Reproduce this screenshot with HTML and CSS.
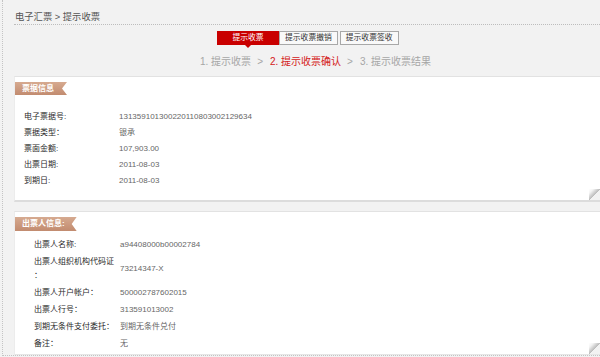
FILE: index.html
```html
<!DOCTYPE html>
<html lang="zh-CN">
<head>
<meta charset="utf-8">
<title>提示收票</title>
<link rel="stylesheet" href="styles.css">
</head>
<body>
<div class="page">
  <div class="crumb">电子汇票 &gt; 提示收票</div>
  <div class="tabs">
    <span class="tab tab-active">提示收票</span>
    <span class="tab">提示收票撤销</span>
    <span class="tab tab-last">提示收票签收</span>
  </div>
  <div class="steps">
    <span class="step">1. 提示收票</span><span class="sep">&gt;</span><span class="step step-current">2. 提示收票确认</span><span class="sep">&gt;</span><span class="step">3. 提示收票结果</span>
  </div>
  <section class="panel panel-bill">
    <div class="ribbon">票据信息</div>
    <div class="fields fields-bill">
      <div class="label">电子票据号:</div><div class="value">131359101300220110803002129634</div>
      <div class="label">票据类型：</div><div class="value">银承</div>
      <div class="label">票面金额:</div><div class="value">107,903.00</div>
      <div class="label">出票日期:</div><div class="value">2011-08-03</div>
      <div class="label">到期日:</div><div class="value">2011-08-03</div>
    </div>
  </section>
  <section class="panel panel-drawer">
    <div class="ribbon ribbon-wide">出票人信息:</div>
    <div class="fields fields-drawer">
      <div class="label">出票人名称:</div><div class="value">a94408000b00002784</div>
      <div class="label label-wrap">出票人组织机构代码证：</div><div class="value">73214347-X</div>
      <div class="label">出票人开户帐户：</div><div class="value">500002787602015</div>
      <div class="label">出票人行号：</div><div class="value">313591013002</div>
      <div class="label">到期无条件支付委托：</div><div class="value">到期无条件兑付</div>
      <div class="label">备注：</div><div class="value">无</div>
    </div>
  </section>
</div>
</body>
</html>
```
FILE: styles.css
```css
html, body {
  margin: 0;
  padding: 0;
}
body {
  background: #f2f2f2;
  font-family: "Liberation Sans", "Noto Sans CJK SC", sans-serif;
  color: #333;
  overflow: hidden;
  width: 600px;
  height: 357px;
}
.page {
  margin-left: 2px;
  border-left: 1px dotted #c4c4c4;
  border-bottom: 1px dotted #c4c4c4;
  padding-left: 11px;
}
.crumb {
  font-size: 9.3px;
  line-height: 14px;
  padding-top: 10px;
  height: 14px;
  color: #555;
  border-bottom: 1px dotted #bdbdbd;
  padding-left: 1px;
}
.tabs {
  display: flex;
  margin-top: 6px;
  padding-left: 203px;
  font-size: 7.8px;
  line-height: 12px;
}
.tab {
  position: relative;
  border: 1px solid #a8a8a8;
  background: #f9f9f9;
  padding: 0 5px;
  color: #333;
  white-space: nowrap;
}
.tab-active {
  width: 50px;
  text-align: center;
  background: #c90000;
  border-color: #c90000;
  color: #fff;
}
.tab-active::after {
  content: "";
  position: absolute;
  left: 27px;
  bottom: -4px;
  border-left: 3px solid transparent;
  border-right: 3px solid transparent;
  border-top: 3px solid #c90000;
}
.tab-last {
  margin-left: 2px;
}
.steps {
  margin-top: 10px;
  padding-left: 186px;
  font-size: 10px;
  line-height: 14px;
  color: #a6a6a6;
  white-space: nowrap;
}
.sep {
  margin: 0 7px 0 6px;
}
.step-current {
  color: #d42020;
}
.panel {
  position: relative;
  background: #fff;
  border-top: 1px solid #e2e2e2;
  border-left: 1px solid #ececec;
}
.panel::after {
  content: "";
  position: absolute;
  right: 0;
  bottom: 0;
  width: 11px;
  height: 11px;
  background: linear-gradient(to top left, #f2f2f2 50%, #bdbdbd 50%, #f4f4f4 80%, #fff 100%);
}
.panel-bill {
  margin-top: 7px;
  padding-bottom: 11px;
  border-bottom: 2px solid #dcdcdc;
}
.panel-drawer {
  margin-top: 9px;
  padding-bottom: 2px;
  border-bottom: 1px solid #e6e6e6;
}
.ribbon {
  display: inline-block;
  margin-top: 5px;
  height: 13px;
  line-height: 13px;
  padding: 0 13px 0 7px;
  font-size: 8px;
  font-weight: bold;
  color: #fff;
  background: linear-gradient(#d6aa90, #c28b6f);
  clip-path: polygon(0 0, 100% 0, calc(100% - 5px) 50%, 100% 100%, 0 100%);
  vertical-align: top;
}
.ribbon-wide {
  height: 14px;
  line-height: 14px;
  padding-right: 12px;
}
.fields {
  display: grid;
  align-items: center;
  font-size: 8px;
}
.fields-bill {
  grid-template-columns: 95px 1fr;
  grid-auto-rows: 16px;
  margin-top: 14px;
  padding-left: 9px;
}
.fields-drawer {
  grid-template-columns: 86px 1fr;
  margin-top: 5px;
  padding-left: 19px;
}
.fields-drawer .label,
.fields-drawer .value {
  padding: 1.5px 0;
  line-height: 14px;
}
.label-wrap {
  line-break: anywhere;
}
.label {
  color: #2a2a2a;
}
.value {
  color: #666;
}
.fields-bill .label,
.fields-bill .value {
  line-height: 16px;
}
```
